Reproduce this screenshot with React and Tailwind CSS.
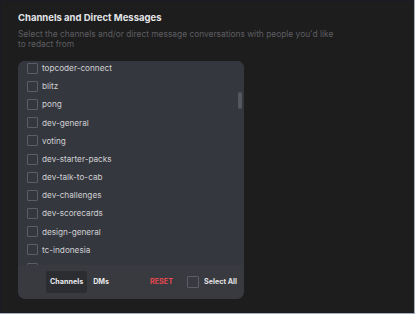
import React from 'react';

const CHANNELS = [
  'topcoder-connect',
  'blitz',
  'pong',
  'dev-general',
  'voting',
  'dev-starter-packs',
  'dev-talk-to-cab',
  'dev-challenges',
  'dev-scorecards',
  'design-general',
  'tc-indonesia',
  'tc-announcements',
];

const Box = () => (
  <span className="w-[11px] h-[11px] shrink-0 border border-[#5b5e65] rounded-[1px]" />
);

export default function App() {
  return (
    <div className="w-[415px] h-[314px] bg-[#a9adc0] font-['Inter',sans-serif]">
      <div className="w-[414px] h-[313px] bg-[#1d1d1e] border-l border-t border-[#191a22] pt-[11px] pl-[17px]">
        <h2 className="text-[9.5px] leading-[12px] font-bold text-[#e4e4e6]">Channels and Direct Messages</h2>
        <p className="mt-[5px] w-[322px] text-[8.4px] leading-[10px] text-[#5d5e61]">
          Select the channels and/or direct message conversations with people you'd like to redact from
        </p>

        <div className="mt-[12px] w-[226px] h-[238px] rounded-[7px] bg-[#383a40] overflow-hidden flex flex-col">
          <div className="relative h-[204px] bg-[#35373e] overflow-hidden">
            <ul className="pl-[9px] -mt-[2px]">
              {CHANNELS.map((name) => (
                <li key={name} className="h-[18.2px] flex items-center gap-[4px]">
                  <Box />
                  <span className="text-[8.2px] text-[#cfd0d3]">{name}</span>
                </li>
              ))}
            </ul>
            <div className="absolute right-[2px] top-[31px] w-[4px] h-[17px] rounded-full bg-[#54575e]" />
          </div>

          <div className="flex-1 flex items-center pl-[28px] pr-[6px]">
            <button className="h-[22px] px-[4px] bg-[#2b2d31] rounded-[2px] text-[7.2px] font-bold text-[#e8e8ea]">Channels</button>
            <button className="ml-[2px] px-[4px] text-[7.2px] font-bold text-[#e8e8ea]">DMs</button>
            <button className="ml-auto text-[7.2px] font-bold text-[#e5484d]">RESET</button>
            <span className="ml-[14px] w-[12px] h-[12px] border border-[#5b5e65] rounded-[1px]" />
            <span className="ml-[5px] mr-[1px] text-[7.2px] font-bold text-[#e0e0e2]">Select All</span>
          </div>
        </div>
      </div>
    </div>
  );
}
